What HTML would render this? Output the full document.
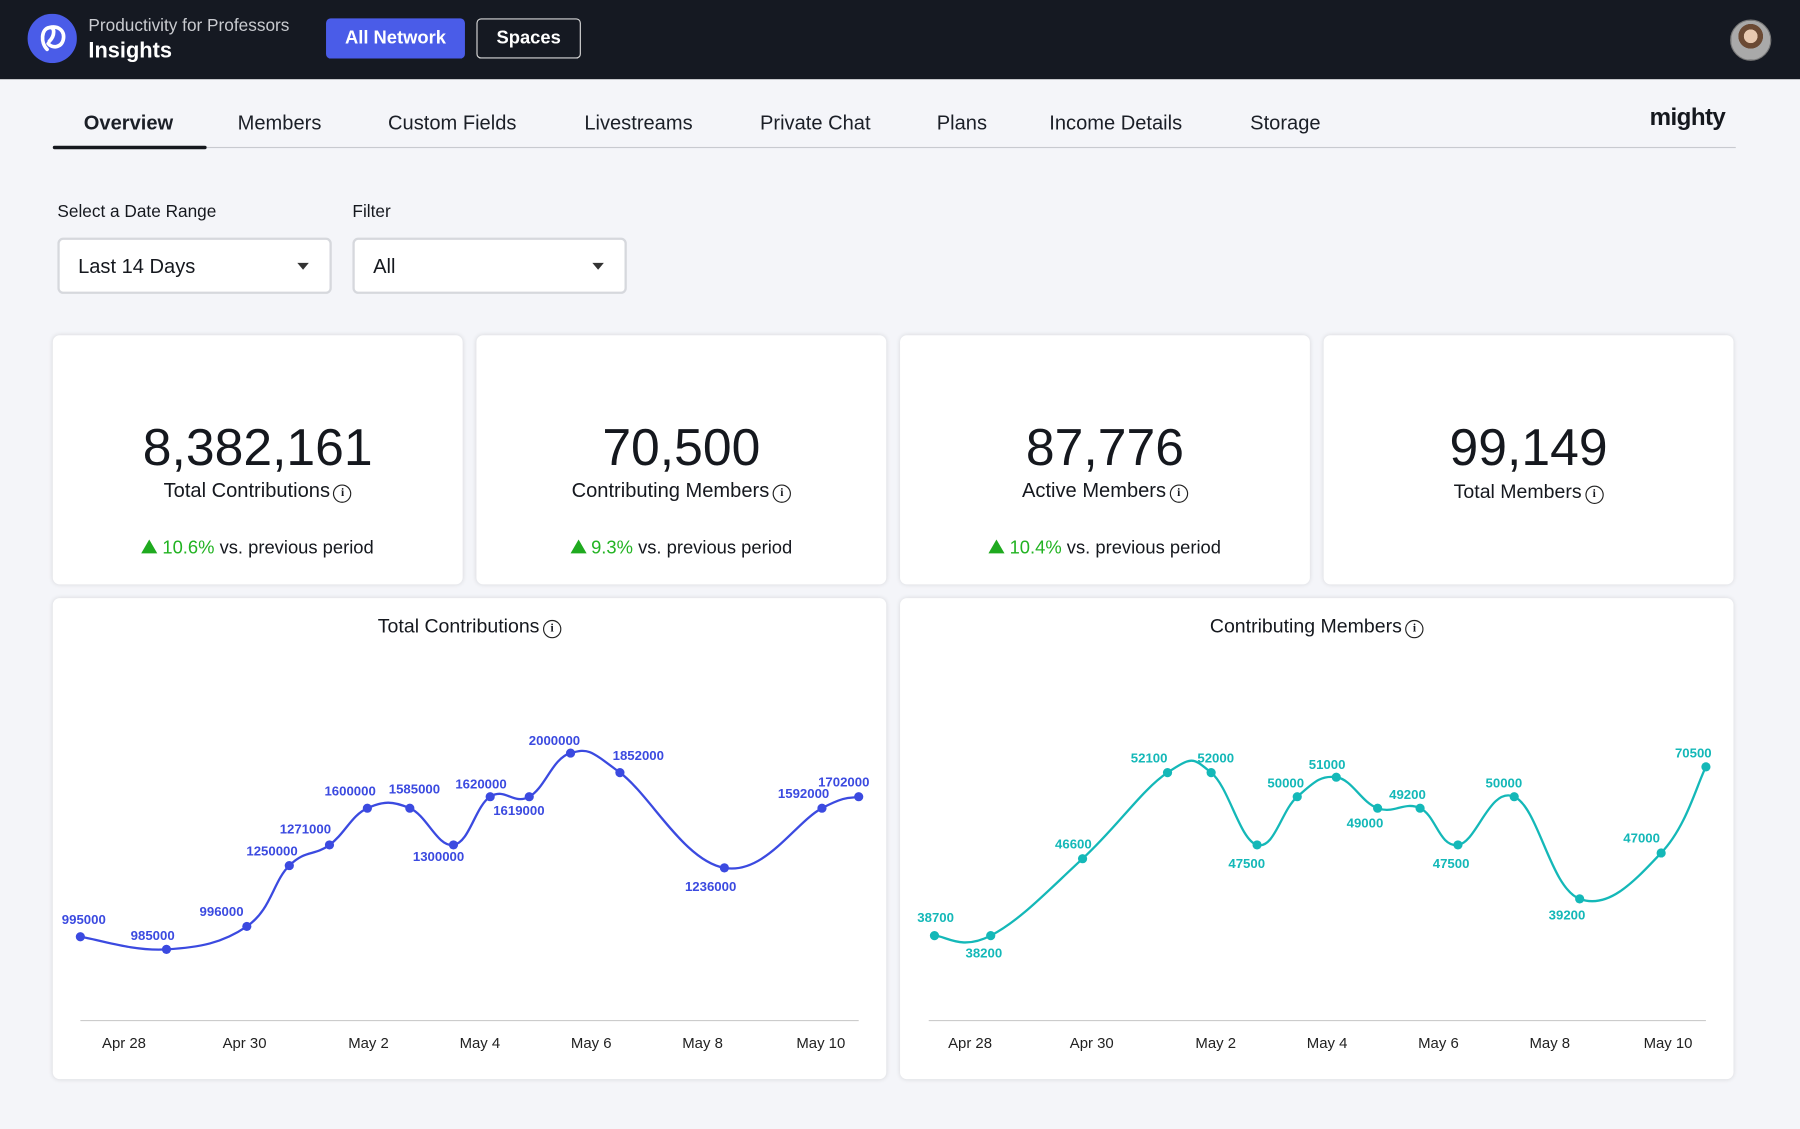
<!DOCTYPE html>
<html><head><meta charset="utf-8">
<style>
*{margin:0;padding:0;box-sizing:border-box}
body{width:1800px;height:1129px;overflow:hidden;background:#f4f5f9;font-family:"Liberation Sans",sans-serif;color:#15181e}
#w{position:absolute;left:0;top:0;width:1568px;height:983px;transform:scale(1.148);transform-origin:0 0}
.a{position:absolute}
.hdr{left:0;top:0;width:1568px;height:69px;background:#151922}
.tab{top:97px;font-size:17.5px;color:#1b1f27}
.card{background:#fff;border-radius:6px;box-shadow:0 0 4px rgba(0,0,0,.12)}
.ct{position:absolute;width:100%;text-align:center}
.info{display:inline-block;width:16px;height:16px;border:1.4px solid #222;border-radius:50%;font-size:10px;line-height:13px;text-align:center;font-weight:bold;vertical-align:1px;margin-left:3px;font-family:"Liberation Serif",serif}
.dd{background:#fff;border:2px solid #d6d8dd;border-radius:5px;height:49px;font-size:17.5px;padding:13px 16px}
.dd:after{content:"";position:absolute;right:18px;top:20px;border:5px solid transparent;border-top:6px solid #333}
.up{display:inline-block;border:7px solid transparent;border-bottom:12px solid #1faa1f;border-top:0;margin-right:4px;vertical-align:0}
.g{color:#22b322}
svg text{font-family:"Liberation Sans",sans-serif}
</style></head><body><div id="w">
<div class="a hdr"></div>
<svg class="a" style="left:24px;top:12px" width="43" height="43" viewBox="0 0 43 43"><circle cx="21.5" cy="21.5" r="21.5" fill="#4a5ce8"/><path d="M17 31 C11 25 12 13 19 12 C24 11 24 19 19 24 M19 12 C27 10 33 15 31 23 C29 30 21 30 18 26" fill="none" stroke="#fff" stroke-width="3.2" stroke-linecap="round"/></svg>
<div class="a" style="left:77px;top:14px;color:#c9cbd0;font-size:15px">Productivity for Professors</div>
<div class="a" style="left:77px;top:34px;color:#fff;font-size:19px;font-weight:bold">Insights</div>
<div class="a" style="left:284px;top:16px;width:121px;height:35px;background:#4a5ce8;border-radius:4px;color:#fff;font-weight:bold;font-size:16px;text-align:center;line-height:35px">All Network</div>
<div class="a" style="left:415px;top:16px;width:91px;height:35px;border:1.5px solid #d8d8d8;border-radius:4px;color:#fff;font-weight:bold;font-size:16px;text-align:center;line-height:33px">Spaces</div>
<div class="a" style="left:1507px;top:17px;width:36px;height:36px;border-radius:50%;background:radial-gradient(circle at 50% 40%,#e8c9b0 0 22%,#6b4a34 23% 40%,#a9a9a9 41%);border:1px solid #777"></div>

<div class="a tab" style="left:73px;font-weight:bold">Overview</div>
<div class="a tab" style="left:207px">Members</div>
<div class="a tab" style="left:338px">Custom Fields</div>
<div class="a tab" style="left:509px">Livestreams</div>
<div class="a tab" style="left:662px">Private Chat</div>
<div class="a tab" style="left:816px">Plans</div>
<div class="a tab" style="left:914px">Income Details</div>
<div class="a tab" style="left:1089px">Storage</div>
<div class="a" style="left:1437px;top:91px;font-size:21px;font-weight:bold;letter-spacing:-0.5px">mighty</div>
<div class="a" style="left:46px;top:128px;width:1466px;height:1px;background:#c8cad0"></div>
<div class="a" style="left:46px;top:127px;width:134px;height:3px;background:#15181e;border-radius:2px"></div>

<div class="a" style="left:50px;top:176px;font-size:15px">Select a Date Range</div>
<div class="a" style="left:307px;top:176px;font-size:15px">Filter</div>
<div class="a dd" style="left:50px;top:207px;width:239px">Last 14 Days</div>
<div class="a dd" style="left:307px;top:207px;width:239px">All</div>

<div class="a card" style="left:46px;top:292px;width:357px;height:217px">
<div class="ct" style="top:72px;font-size:45px">8,382,161</div>
<div class="ct" style="top:125px;font-size:17.5px">Total Contributions<span class="info">i</span></div>
<div class="ct" style="top:177px;font-size:16px"><span class="up"></span><span class="g">10.6%</span> vs. previous period</div></div>
<div class="a card" style="left:415px;top:292px;width:357px;height:217px">
<div class="ct" style="top:72px;font-size:45px">70,500</div>
<div class="ct" style="top:125px;font-size:17.5px">Contributing Members<span class="info">i</span></div>
<div class="ct" style="top:177px;font-size:16px"><span class="up"></span><span class="g">9.3%</span> vs. previous period</div></div>
<div class="a card" style="left:784px;top:292px;width:357px;height:217px">
<div class="ct" style="top:72px;font-size:45px">87,776</div>
<div class="ct" style="top:125px;font-size:17.5px">Active Members<span class="info">i</span></div>
<div class="ct" style="top:177px;font-size:16px"><span class="up"></span><span class="g">10.4%</span> vs. previous period</div></div>
<div class="a card" style="left:1153px;top:292px;width:357px;height:217px">
<div class="ct" style="top:72px;font-size:45px">99,149</div>
<div class="ct" style="top:127px;font-size:17px">Total Members<span class="info">i</span></div></div>

<div class="a card" style="left:46px;top:521px;width:726px;height:419px">
<div class="ct" style="top:15px;font-size:17px">Total Contributions<span class="info">i</span></div></div>
<div class="a card" style="left:784px;top:521px;width:726px;height:419px">
<div class="ct" style="top:15px;font-size:17px">Contributing Members<span class="info">i</span></div></div>

<svg class="a" id="sv" style="left:0;top:0" width="1568" height="983" viewBox="0 0 1568 983">
<line x1="70" y1="889" x2="748" y2="889" stroke="#ccc"/>
<line x1="809" y1="889" x2="1486" y2="889" stroke="#ccc"/>
<g font-size="13" fill="#222" text-anchor="middle">
<text x="108" y="913">Apr 28</text><text x="213" y="913">Apr 30</text><text x="321" y="913">May 2</text><text x="418" y="913">May 4</text><text x="515" y="913">May 6</text><text x="612" y="913">May 8</text><text x="715" y="913">May 10</text>
<text x="845" y="913">Apr 28</text><text x="951" y="913">Apr 30</text><text x="1059" y="913">May 2</text><text x="1156" y="913">May 4</text><text x="1253" y="913">May 6</text><text x="1350" y="913">May 8</text><text x="1453" y="913">May 10</text>
</g>
<path id="p1" fill="none" stroke="#3b4ae0" stroke-width="2"/>
<path id="p2" fill="none" stroke="#14b8b8" stroke-width="2"/>
<g id="d1" fill="#3b4ae0"></g><g id="d2" fill="#14b8b8"></g>
<g font-size="11.5" font-weight="bold" fill="#3b4ae0" text-anchor="middle">
<text x="73" y="805">995000</text><text x="133" y="819">985000</text><text x="193" y="798">996000</text><text x="237" y="745">1250000</text><text x="266" y="726">1271000</text><text x="305" y="693">1600000</text><text x="361" y="691">1585000</text><text x="382" y="750">1300000</text><text x="419" y="687">1620000</text><text x="452" y="710">1619000</text><text x="483" y="649">2000000</text><text x="556" y="662">1852000</text><text x="619" y="776">1236000</text><text x="700" y="695">1592000</text><text x="735" y="685">1702000</text>
</g>
<g font-size="11.5" font-weight="bold" fill="#14b8b8" text-anchor="middle">
<text x="815" y="803">38700</text><text x="857" y="834">38200</text><text x="935" y="739">46600</text><text x="1001" y="664">52100</text><text x="1059" y="664">52000</text><text x="1086" y="756">47500</text><text x="1120" y="686">50000</text><text x="1156" y="670">51000</text><text x="1189" y="721">49000</text><text x="1226" y="696">49200</text><text x="1264" y="756">47500</text><text x="1310" y="686">50000</text><text x="1365" y="801">39200</text><text x="1430" y="734">47000</text><text x="1475" y="660">70500</text>
</g>
</svg>
</div>
<script>
function draw(pts,pid,gid){var d="M"+pts[0][0]+","+pts[0][1];
for(var i=0;i<pts.length-1;i++){var p0=pts[i-1]||pts[i],p1=pts[i],p2=pts[i+1],p3=pts[i+2]||p2;var t=0.2;
d+=" C"+(p1[0]+(p2[0]-p0[0])*t)+","+(p1[1]+(p2[1]-p0[1])*t)+" "+(p2[0]-(p3[0]-p1[0])*t)+","+(p2[1]-(p3[1]-p1[1])*t)+" "+p2[0]+","+p2[1];}
document.getElementById(pid).setAttribute("d",d);var g=document.getElementById(gid),h="";
pts.forEach(function(p){h+='<circle cx="'+p[0]+'" cy="'+p[1]+'" r="4"/>'});g.innerHTML=h;}
draw([[70,816],[145,827],[215,807],[252,754],[287,736],[320,704],[357,704],[395,736],[427,694],[461,694],[497,656],[540,673],[631,756],[716,704],[748,694]],"p1","d1");
draw([[814,815],[863,815],[943,748],[1017,673],[1055,673],[1095,736],[1130,694],[1164,677],[1200,704],[1237,704],[1270,736],[1319,694],[1376,783],[1447,743],[1486,668]],"p2","d2");
</script>
</body></html>
